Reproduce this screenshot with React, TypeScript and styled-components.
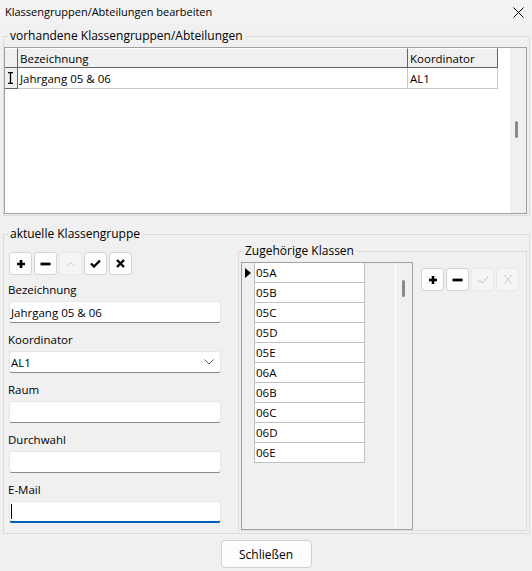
import React from "react";
import styled, { createGlobalStyle } from "styled-components";

const GlobalStyle = createGlobalStyle`
  html, body {
    margin: 0;
    padding: 0;
    background: #f0f0f0;
  }
  body {
    font-family: "Open Sans", "Noto Sans", "Liberation Sans", sans-serif;
    font-size: 11.5px;
    color: #000;
  }
  * {
    box-sizing: border-box;
  }
`;

const Window = styled.div`
  width: 532px;
  height: 571px;
  background: #f0f0f0;
  display: flex;
  flex-direction: column;
  overflow: hidden;
`;

const TitleBar = styled.div`
  height: 24px;
  display: flex;
  align-items: center;
  justify-content: space-between;
  padding: 0 8px 0 5px;
  background: #f3f3f3;
`;

const TitleText = styled.span`
  font-size: 11px;
  line-height: 16px;
`;

const GroupBox = styled.fieldset`
  margin: 0;
  padding: 0;
  border: 1px solid #dcdcdc;
  min-width: 0;
`;

const Legend = styled.legend`
  margin-left: 4px;
  padding: 0 2px;
  font-size: 12px;
  line-height: 16px;
`;

const UpperGroup = styled(GroupBox)`
  margin: 4px 0 0 3px;
  width: 527px;
`;

const UpperContent = styled.div`
  padding: 3px 2px 1px 0;
`;

const GridFrame = styled.div<{ $height: number; $width?: number }>`
  display: flex;
  height: ${(p) => p.$height}px;
  width: ${(p) => (p.$width ? `${p.$width}px` : "auto")};
  border: 1px solid #a0a0a0;
  background: #fff;
`;

const TableArea = styled.div`
  flex: 1;
  display: flex;
  flex-direction: column;
  background: #fff;
`;

const TableRow = styled.div<{ $height: number }>`
  display: flex;
  height: ${(p) => p.$height}px;
`;

const Cell = styled.div<{ $width: number; $kind: "header" | "indicator" | "data" }>`
  width: ${(p) => p.$width}px;
  display: flex;
  align-items: center;
  padding-left: 2px;
  white-space: nowrap;
  background: ${(p) => (p.$kind === "data" ? "#fff" : "#f0f0f0")};
  border-right: 1px solid ${(p) => (p.$kind === "data" ? "#c8c8c8" : "#646464")};
  border-bottom: 1px solid ${(p) => (p.$kind === "data" ? "#c8c8c8" : "#646464")};
  border-top: ${(p) => (p.$kind === "header" ? "1px solid #fff" : "none")};
`;

const ScrollTrack = styled.div<{ $width: number; $thumbTop: number; $thumbLeft: number }>`
  width: ${(p) => p.$width}px;
  background: #f0f0f0;
  padding-top: ${(p) => p.$thumbTop}px;
  padding-left: ${(p) => p.$thumbLeft}px;
`;

const Thumb = styled.div`
  width: 3px;
  height: 17px;
  border-radius: 1.5px;
  background: #8a8a8a;
`;

const LowerGroup = styled(GroupBox)`
  margin: 10px 0 0 3px;
  width: 527px;
`;

const LowerContent = styled.div`
  display: flex;
  align-items: flex-start;
  padding: 1px 1px 1px 0;
`;

const FormColumn = styled.div`
  width: 234px;
  padding: 9px 0 0 5px;
  display: flex;
  flex-direction: column;
`;

const Toolbar = styled.div<{ $mb?: number }>`
  display: flex;
  gap: 2px;
  margin-bottom: ${(p) => p.$mb ?? 0}px;
`;

const ToolButton = styled.div<{ $disabled?: boolean }>`
  width: 23px;
  height: 23px;
  display: flex;
  align-items: center;
  justify-content: center;
  border-radius: 3px;
  background: ${(p) => (p.$disabled ? "#f5f5f5" : "#fdfdfd")};
  border: 1px solid ${(p) => (p.$disabled ? "#e8e8e8" : "#cfd5dd")};
`;

const Field = styled.div`
  display: flex;
  flex-direction: column;
  margin-bottom: 9px;
`;

const FieldLabel = styled.label`
  line-height: 16px;
  margin: 0 0 3px -1px;
`;

const TextBox = styled.div<{ $focused?: boolean }>`
  width: 212px;
  height: 22px;
  display: flex;
  align-items: center;
  justify-content: space-between;
  padding: 0 6px 0 1px;
  background: #fff;
  border: 1px solid #e6e6e6;
  border-radius: 3px;
  border-bottom: ${(p) => (p.$focused ? "2px solid #005fb8" : "1px solid #8a8a8a")};
  white-space: nowrap;
`;

const Caret = styled.span`
  display: inline-block;
  width: 1px;
  height: 15px;
  background: #000;
`;

const ClassGroup = styled(GroupBox)`
  flex: 1;
  margin-right: 1px;
`;

const ClassContent = styled.div`
  display: flex;
  align-items: flex-start;
  padding: 3px 0 0 2px;
`;

const ClassGridFrame = styled(GridFrame)`
  background: #f0f0f0;
`;

const ClassRows = styled.div`
  flex: 1;
  display: flex;
  flex-direction: column;
`;

const ClassRow = styled.div`
  display: flex;
  height: 20px;
`;

const RowMarker = styled.div`
  width: 12px;
  display: flex;
  align-items: center;
  padding-left: 3px;
`;

const ClassCell = styled.div`
  width: 111px;
  display: flex;
  align-items: center;
  padding-left: 1px;
  background: #fff;
  border-left: 1px solid #c0c0c0;
  border-right: 1px solid #c0c0c0;
  border-bottom: 1px solid #c0c0c0;
`;

const ClassTrack = styled(ScrollTrack)`
  border-left: 1px solid #fff;
`;

const SideToolbar = styled(Toolbar)`
  margin: 6px 0 0 8px;
  gap: 2px;
`;

const Footer = styled.div`
  display: flex;
  justify-content: center;
  padding-top: 6px;
`;

const DialogButton = styled.div`
  width: 91px;
  height: 28px;
  display: flex;
  align-items: center;
  justify-content: center;
  background: #fdfdfd;
  border: 1px solid #d0d0d0;
  border-radius: 4px;
  font-size: 12px;
`;

const Icon = ({ kind, muted }: { kind: string; muted?: boolean }) => {
  const c = muted ? "#c8c8c8" : "#000";
  switch (kind) {
    case "plus":
      return (
        <svg width="10" height="10" viewBox="0 0 10 10">
          <path d="M5 1V9M1 5H9" stroke={c} strokeWidth="2.6" />
        </svg>
      );
    case "minus":
      return (
        <svg width="11" height="10" viewBox="0 0 11 10">
          <path d="M0.5 5H10.5" stroke={c} strokeWidth="2.8" />
        </svg>
      );
    case "edit":
      return (
        <svg width="10" height="8" viewBox="0 0 10 8">
          <path d="M1 6.5L5 2.5L8.5 6" stroke={c} strokeWidth="1" fill="none" />
        </svg>
      );
    case "check":
      return muted ? (
        <svg width="12" height="10" viewBox="0 0 12 10">
          <path d="M1 7L3 5.5L5 8L11 2" stroke={c} strokeWidth="1.1" fill="none" strokeDasharray="2 1" />
        </svg>
      ) : (
        <svg width="11" height="9" viewBox="0 0 11 9">
          <path d="M1 4.5L4 7.5L10 1.5" stroke={c} strokeWidth="2.3" fill="none" />
        </svg>
      );
    case "cross":
      return muted ? (
        <svg width="10" height="11" viewBox="0 0 10 11">
          <path d="M1.5 1L8.5 10M8.5 1L1.5 10" stroke={c} strokeWidth="1.1" fill="none" strokeDasharray="2.5 1" />
        </svg>
      ) : (
        <svg width="9" height="9" viewBox="0 0 9 9">
          <path d="M1 1L8 8M8 1L1 8" stroke={c} strokeWidth="2.4" />
        </svg>
      );
    default:
      return null;
  }
};

const classes = ["05A", "05B", "05C", "05D", "05E", "06A", "06B", "06C", "06D", "06E"];

const fields = [
  { label: "Bezeichnung", value: "Jahrgang 05 & 06" },
  { label: "Koordinator", value: "AL1", combo: true },
  { label: "Raum", value: "" },
  { label: "Durchwahl", value: "" },
  { label: "E-Mail", value: "", focused: true },
];

export default function App() {
  return (
    <Window>
      <GlobalStyle />
      <TitleBar>
        <TitleText>Klassengruppen/Abteilungen bearbeiten</TitleText>
        <svg width="11" height="11" viewBox="0 0 11 11">
          <path d="M0.5 0.5L10.5 10.5M10.5 0.5L0.5 10.5" stroke="#000" strokeWidth="1" />
        </svg>
      </TitleBar>

      <UpperGroup>
        <Legend>vorhandene Klassengruppen/Abteilungen</Legend>
        <UpperContent>
          <GridFrame $height={167}>
            <TableArea>
              <TableRow $height={20}>
                <Cell $width={13} $kind="header" />
                <Cell $width={390} $kind="header">Bezeichnung</Cell>
                <Cell $width={90} $kind="header">Koordinator</Cell>
              </TableRow>
              <TableRow $height={21}>
                <Cell $width={13} $kind="indicator">
                  <svg width="7" height="12" viewBox="0 0 7 12">
                    <path d="M1 0.5H6M3.5 0.5V11.5M1 11.5H6" stroke="#000" strokeWidth="1.3" />
                  </svg>
                </Cell>
                <Cell $width={390} $kind="data">Jahrgang 05 &amp; 06</Cell>
                <Cell $width={90} $kind="data">AL1</Cell>
              </TableRow>
            </TableArea>
            <ScrollTrack $width={16} $thumbTop={73} $thumbLeft={5}>
              <Thumb />
            </ScrollTrack>
          </GridFrame>
        </UpperContent>
      </UpperGroup>

      <LowerGroup>
        <Legend>aktuelle Klassengruppe</Legend>
        <LowerContent>
          <FormColumn>
            <Toolbar $mb={7}>
              <ToolButton><Icon kind="plus" /></ToolButton>
              <ToolButton><Icon kind="minus" /></ToolButton>
              <ToolButton $disabled><Icon kind="edit" muted /></ToolButton>
              <ToolButton><Icon kind="check" /></ToolButton>
              <ToolButton><Icon kind="cross" /></ToolButton>
            </Toolbar>
            {fields.map((f) => (
              <Field key={f.label}>
                <FieldLabel>{f.label}</FieldLabel>
                <TextBox $focused={f.focused}>
                  {f.focused ? <Caret /> : <span>{f.value}</span>}
                  {f.combo && (
                    <svg width="10" height="6" viewBox="0 0 10 6">
                      <path d="M0.5 0.5L5 5L9.5 0.5" stroke="#5f5f5f" strokeWidth="1" fill="none" />
                    </svg>
                  )}
                </TextBox>
              </Field>
            ))}
          </FormColumn>

          <ClassGroup>
            <Legend>Zugehörige Klassen</Legend>
            <ClassContent>
              <ClassGridFrame $height={268} $width={172}>
                <ClassRows>
                  {classes.map((c, i) => (
                    <ClassRow key={c}>
                      <RowMarker>
                        {i === 0 && (
                          <svg width="6" height="10" viewBox="0 0 6 10">
                            <path d="M0 0L6 5L0 10Z" fill="#000" />
                          </svg>
                        )}
                      </RowMarker>
                      <ClassCell>{c}</ClassCell>
                    </ClassRow>
                  ))}
                </ClassRows>
                <ClassTrack $width={17} $thumbTop={17} $thumbLeft={6}>
                  <Thumb />
                </ClassTrack>
              </ClassGridFrame>
              <SideToolbar>
                <ToolButton><Icon kind="plus" /></ToolButton>
                <ToolButton><Icon kind="minus" /></ToolButton>
                <ToolButton $disabled><Icon kind="check" muted /></ToolButton>
                <ToolButton $disabled><Icon kind="cross" muted /></ToolButton>
              </SideToolbar>
            </ClassContent>
          </ClassGroup>
        </LowerContent>
      </LowerGroup>

      <Footer>
        <DialogButton>Schließen</DialogButton>
      </Footer>
    </Window>
  );
}
